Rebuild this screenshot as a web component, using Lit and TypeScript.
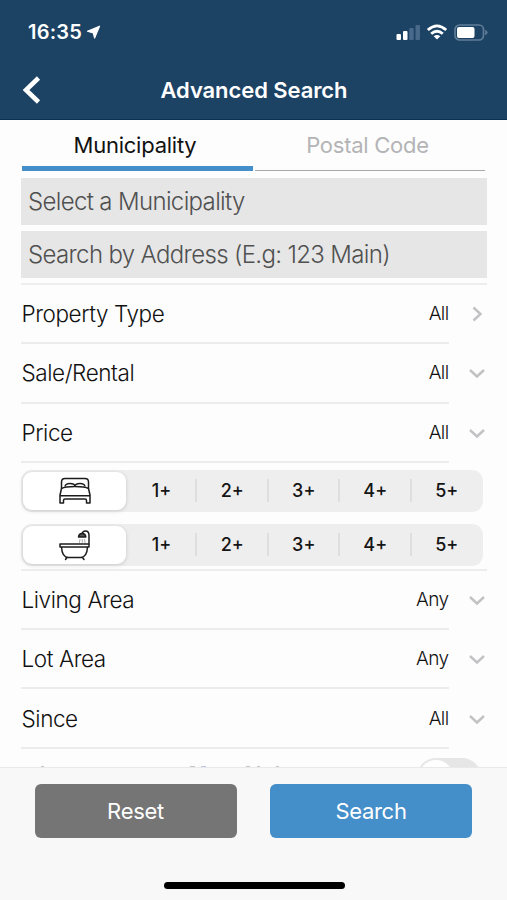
import { LitElement, html, css, svg } from "lit";
import { customElement, property } from "lit/decorators.js";
import { classMap } from "lit/directives/class-map.js";

const bed = svg`<svg class="glyph" width="34" height="28" viewBox="0 0 34 28" fill="none" stroke="#1c1c1c" stroke-width="1.5" stroke-linejoin="round">
  <path d="M3.500 11.500V5Q3.500 1.500 7 1.500H27Q30.500 1.500 30.500 5V11.500"/>
  <path d="M7 9.500Q7.500 6.500 12 6.500Q16.500 6.500 17 9Q17.500 6.500 22 6.500Q26.500 6.500 27 9.500"/>
  <path d="M3.500 11.500Q7 9.500 17 9.500Q27 9.500 30.500 11.500L32 18V26H28.500V23.500Q28.500 22 27 22H7Q5.500 22 5.500 23.500V26H2V18ZM2 18.700H32"/>
</svg>`;

const bath = svg`<svg class="glyph" width="34" height="32" viewBox="0 0 34 32" fill="none" stroke="#1c1c1c" stroke-width="1.5" stroke-linejoin="round" stroke-linecap="round">
  <path d="M2 15H31V18H2ZM3.500 18Q4 28.500 10.500 28.500H22.500Q29 28.500 29.500 18M9 28.500L7.500 30.500M24.500 28.500L26 30.500M31 15V6.500Q31 2 27.500 2Q25 2 24 4.500"/>
  <path d="M20.500 8Q21 4.500 24 4.500Q27.500 4.500 27.800 8Z" fill="#555"/>
  <path d="M22 10.500L21.500 13.500M24.300 10.500V13.500M26.600 10.500L27 13.500" stroke="#aaa" stroke-width="1"/>
</svg>`;

@customElement("status-bar")
class StatusBar extends LitElement {
  static styles = css`
    :host { display: flex; justify-content: space-between; height: 63px; padding: 0 19px 0 28px; box-sizing: border-box; color: #fff; }
    .left, .right { display: flex; align-items: center; height: 64px; }
    .time { font-size: 20px; font-weight: 600; letter-spacing: 0.200px; margin-right: 4px; }
    .bars { margin-right: 6px; }
    .wifi { margin-right: 6px; }
  `;
  render() {
    return html`
      <div class="left">
        <span class="time">16:35</span>
        <svg width="15" height="15" viewBox="0 0 15 15"><path d="M13.500 1.200L8.600 13L7.300 7.900L1.500 6.200Z" fill="#fff" stroke="#fff" stroke-width="1.200" stroke-linejoin="round"/></svg>
      </div>
      <div class="right">
        <svg class="bars" width="24" height="16" viewBox="0 0 24 16" fill="#fff">
          <rect x="0.500" y="10" width="4.500" height="6" rx="1"/>
          <rect x="7" y="7" width="4.500" height="9" rx="1"/>
          <g fill="#49698a"><rect x="13.200" y="4" width="4.500" height="12" rx="1"/><rect x="19.500" y="1" width="4.500" height="15" rx="1"/></g>
        </svg>
        <svg class="wifi" width="22" height="16" viewBox="0 0 22 16" fill="none" stroke="#fff" stroke-width="2.800">
          <path d="M1.800 6Q11 -2.200 20.200 6M5.200 9.800Q11 4.600 16.800 9.800"/>
          <path d="M11 15.500L7.700 12.300Q11 9.700 14.300 12.300Z" fill="#fff" stroke="none"/>
        </svg>
        <svg width="34" height="17" viewBox="0 0 34 17">
          <rect x="1" y="1" width="28.500" height="15" rx="4.500" fill="none" stroke="#5f7d98" stroke-width="1.700"/>
          <rect x="3" y="3" width="17.500" height="11" rx="2" fill="#fff"/>
          <path d="M31.200 5.800Q33.600 6.800 33.600 8.500Q33.600 10.200 31.200 11.200Z" fill="#5f7d98"/>
        </svg>
      </div>`;
  }
}

@customElement("filter-row")
class FilterRow extends LitElement {
  @property() label = "";
  @property() value = "";
  @property() arrow = "down";
  static styles = css`
    :host { display: grid; grid-template-columns: 427.500px 37.500px; height: 59.300px; color: #111; }
    .main { display: flex; align-items: center; justify-content: space-between; border-bottom: 2px solid #ececec; box-sizing: border-box; }
    .label { font-size: 22.500px; font-weight: 350; letter-spacing: -0.420px; padding-left: 0.500px; }
    .value { font-size: 19px; font-weight: 350; letter-spacing: -0.600px; }
    .arrow { display: flex; align-items: center; justify-content: flex-end; padding-bottom: 1px; }
  `;
  render() {
    return html`
      <div class="main"><span class="label">${this.label}</span><span class="value">${this.value}</span></div>
      <div class="arrow">
        <svg width="18" height="18" viewBox="0 0 18 18" fill="none" stroke="#c2c2c4" stroke-width="2.400">
          <path d=${this.arrow === "right" ? "M5.500 2.500L12.500 9L5.500 15.500" : "M2 6L9 12.500L16 6"}/>
        </svg>
      </div>`;
  }
}

@customElement("count-picker")
class CountPicker extends LitElement {
  @property({ attribute: false }) icon: unknown;
  static styles = css`
    :host { display: grid; grid-template-columns: 105px 70px repeat(4, 71.500px); width: 461.500px; height: 42px; background: #eee; border-radius: 11px; box-sizing: border-box; }
    .on { background: #fff; margin: 2px 0 2px 2px; border-radius: 9px; display: flex; align-items: center; justify-content: center; box-shadow: 0 1px 4px rgba(0,0,0,.16); }
    .opt { display: flex; align-items: center; justify-content: center; position: relative; font-size: 18px; font-weight: 500; color: #151515; padding-left: 1px; }
    .line { border-left: 2px solid #dedede; height: 23px; position: absolute; left: -1px; top: 9px; }
  `;
  render() {
    return html`
      <div class="on">${this.icon}</div>
      ${[1, 2, 3, 4, 5].map((n) => html`<div class="opt">${n > 1 ? html`<span class="line"></span>` : ""}${n}+</div>`)}`;
  }
}

@customElement("app-root")
class AppRoot extends LitElement {
  static styles = css`
    :host { display: flex; flex-direction: column; width: 507px; height: 900px; overflow: hidden; background: #fdfdfd; font-family: Inter, "Liberation Sans", sans-serif; }
    .top { background: #1c4264; height: 120px; box-sizing: border-box; border-bottom: 1px solid #0d3155; flex: none; color: #fff; }
    .nav { display: grid; grid-template-columns: 60px 1fr 60px; height: 53px; align-items: center; }
    .back { margin-left: 21px; display: block; }
    .title { text-align: center; font-size: 22px; font-weight: 600; white-space: nowrap; letter-spacing: -0.080px; padding-left: 1px; }
    .content { height: 647px; overflow: hidden; flex: none; padding: 0 20px 0 21px; box-sizing: border-box; }
    .tabs { display: grid; grid-template-columns: 231px 230px; column-gap: 2px; height: 51px; padding-left: 1px; }
    .tab { text-align: center; font-size: 22px; line-height: 50px; box-sizing: border-box; color: #b4b4b6; border-bottom: 1px solid #a9a9ab; height: 51px; padding-right: 5px; letter-spacing: -0.250px; }
    .tab.active { color: #111; border-bottom: 5px solid #448ec9; }
    .field { background: #e6e6e6; height: 47px; line-height: 47px; padding-left: 7px; font-size: 24px; font-weight: 350; color: #505050; white-space: nowrap; }
    .first { margin: 7px 0 6px; letter-spacing: -0.650px; }
    .second { letter-spacing: -0.650px; }
    .rule { height: 2px; background: #ededed; }
    .upper { margin-top: 5px; }
    .pickers { padding: 7px 0 3px; display: grid; row-gap: 12px; }
    .partial { display: grid; grid-template-columns: 1fr 64px; height: 40px; padding: 9px 6px 0 0; box-sizing: border-box; }
    .switch { height: 38px; border-radius: 19px; background: #e6e6e6; padding: 2px; box-sizing: border-box; }
    .knob { width: 34px; height: 34px; border-radius: 17px; background: #fff; }
    .marks { display: block; margin-top: 7px; }
    .footer { flex: 1; background: #f8f8f8; border-top: 1px solid #e9e9e9; padding: 16px 34.500px 0; display: flex; flex-direction: column; }
    .buttons { display: grid; grid-template-columns: 202px 202px; column-gap: 33.500px; }
    .button { height: 54px; border-radius: 6px; color: #fff; font-size: 22px; line-height: 54px; text-align: center; background: #757575; letter-spacing: -0.300px; }
    .button.primary { background: #448ec9; }
    .home { width: 181px; height: 7px; border-radius: 4px; background: #000; margin: 44px 0 0 129px; }
  `;
  render() {
    const row = (label: string, value: string, arrow = "down") =>
      html`<filter-row .label=${label} .value=${value} .arrow=${arrow}></filter-row>`;
    return html`
      <div class="top">
        <status-bar></status-bar>
        <div class="nav">
          <svg class="back" width="20" height="30" viewBox="0 0 20 30" fill="none" stroke="#fff" stroke-width="4.600"><path d="M17.500 3L5 15L17.500 27"/></svg>
          <div class="title">Advanced Search</div>
        </div>
      </div>
      <div class="content">
        <div class="tabs">
          ${["Municipality", "Postal Code"].map((t, i) => html`<div class=${classMap({ tab: true, active: i === 0 })}>${t}</div>`)}
        </div>
        <div class="field first">Select a Municipality</div>
        <div class="field second">Search by Address (E.g: 123 Main)</div>
        <div class="rule upper"></div>
        ${row("Property Type", "All", "right")}${row("Sale/Rental", "All")}${row("Price", "All")}
        <div class="pickers">
          <count-picker .icon=${bed}></count-picker>
          <count-picker .icon=${bath}></count-picker>
        </div>
        <div class="rule"></div>
        ${row("Living Area", "Any")}${row("Lot Area", "Any")}${row("Since", "All")}
        <div class="partial">
          <svg class="marks" width="300" height="3" viewBox="0 0 300 3" fill="#8c8c92">
            <path d="M20 1.500h3v1.500h-3zM169 1.500h5v1.500h-5zM225 1.500h4v1.500h-4zM236 1.500h3v1.500h-3zM255 1.500h3v1.500h-3z"/>
            <path d="M180 1.500h5v1.500h-5z" fill="#8a90c4"/>
          </svg>
          <div class="switch"><div class="knob"></div></div>
        </div>
      </div>
      <div class="footer">
        <div class="buttons"><div class="button">Reset</div><div class="button primary">Search</div></div>
        <div class="home"></div>
      </div>`;
  }
}
